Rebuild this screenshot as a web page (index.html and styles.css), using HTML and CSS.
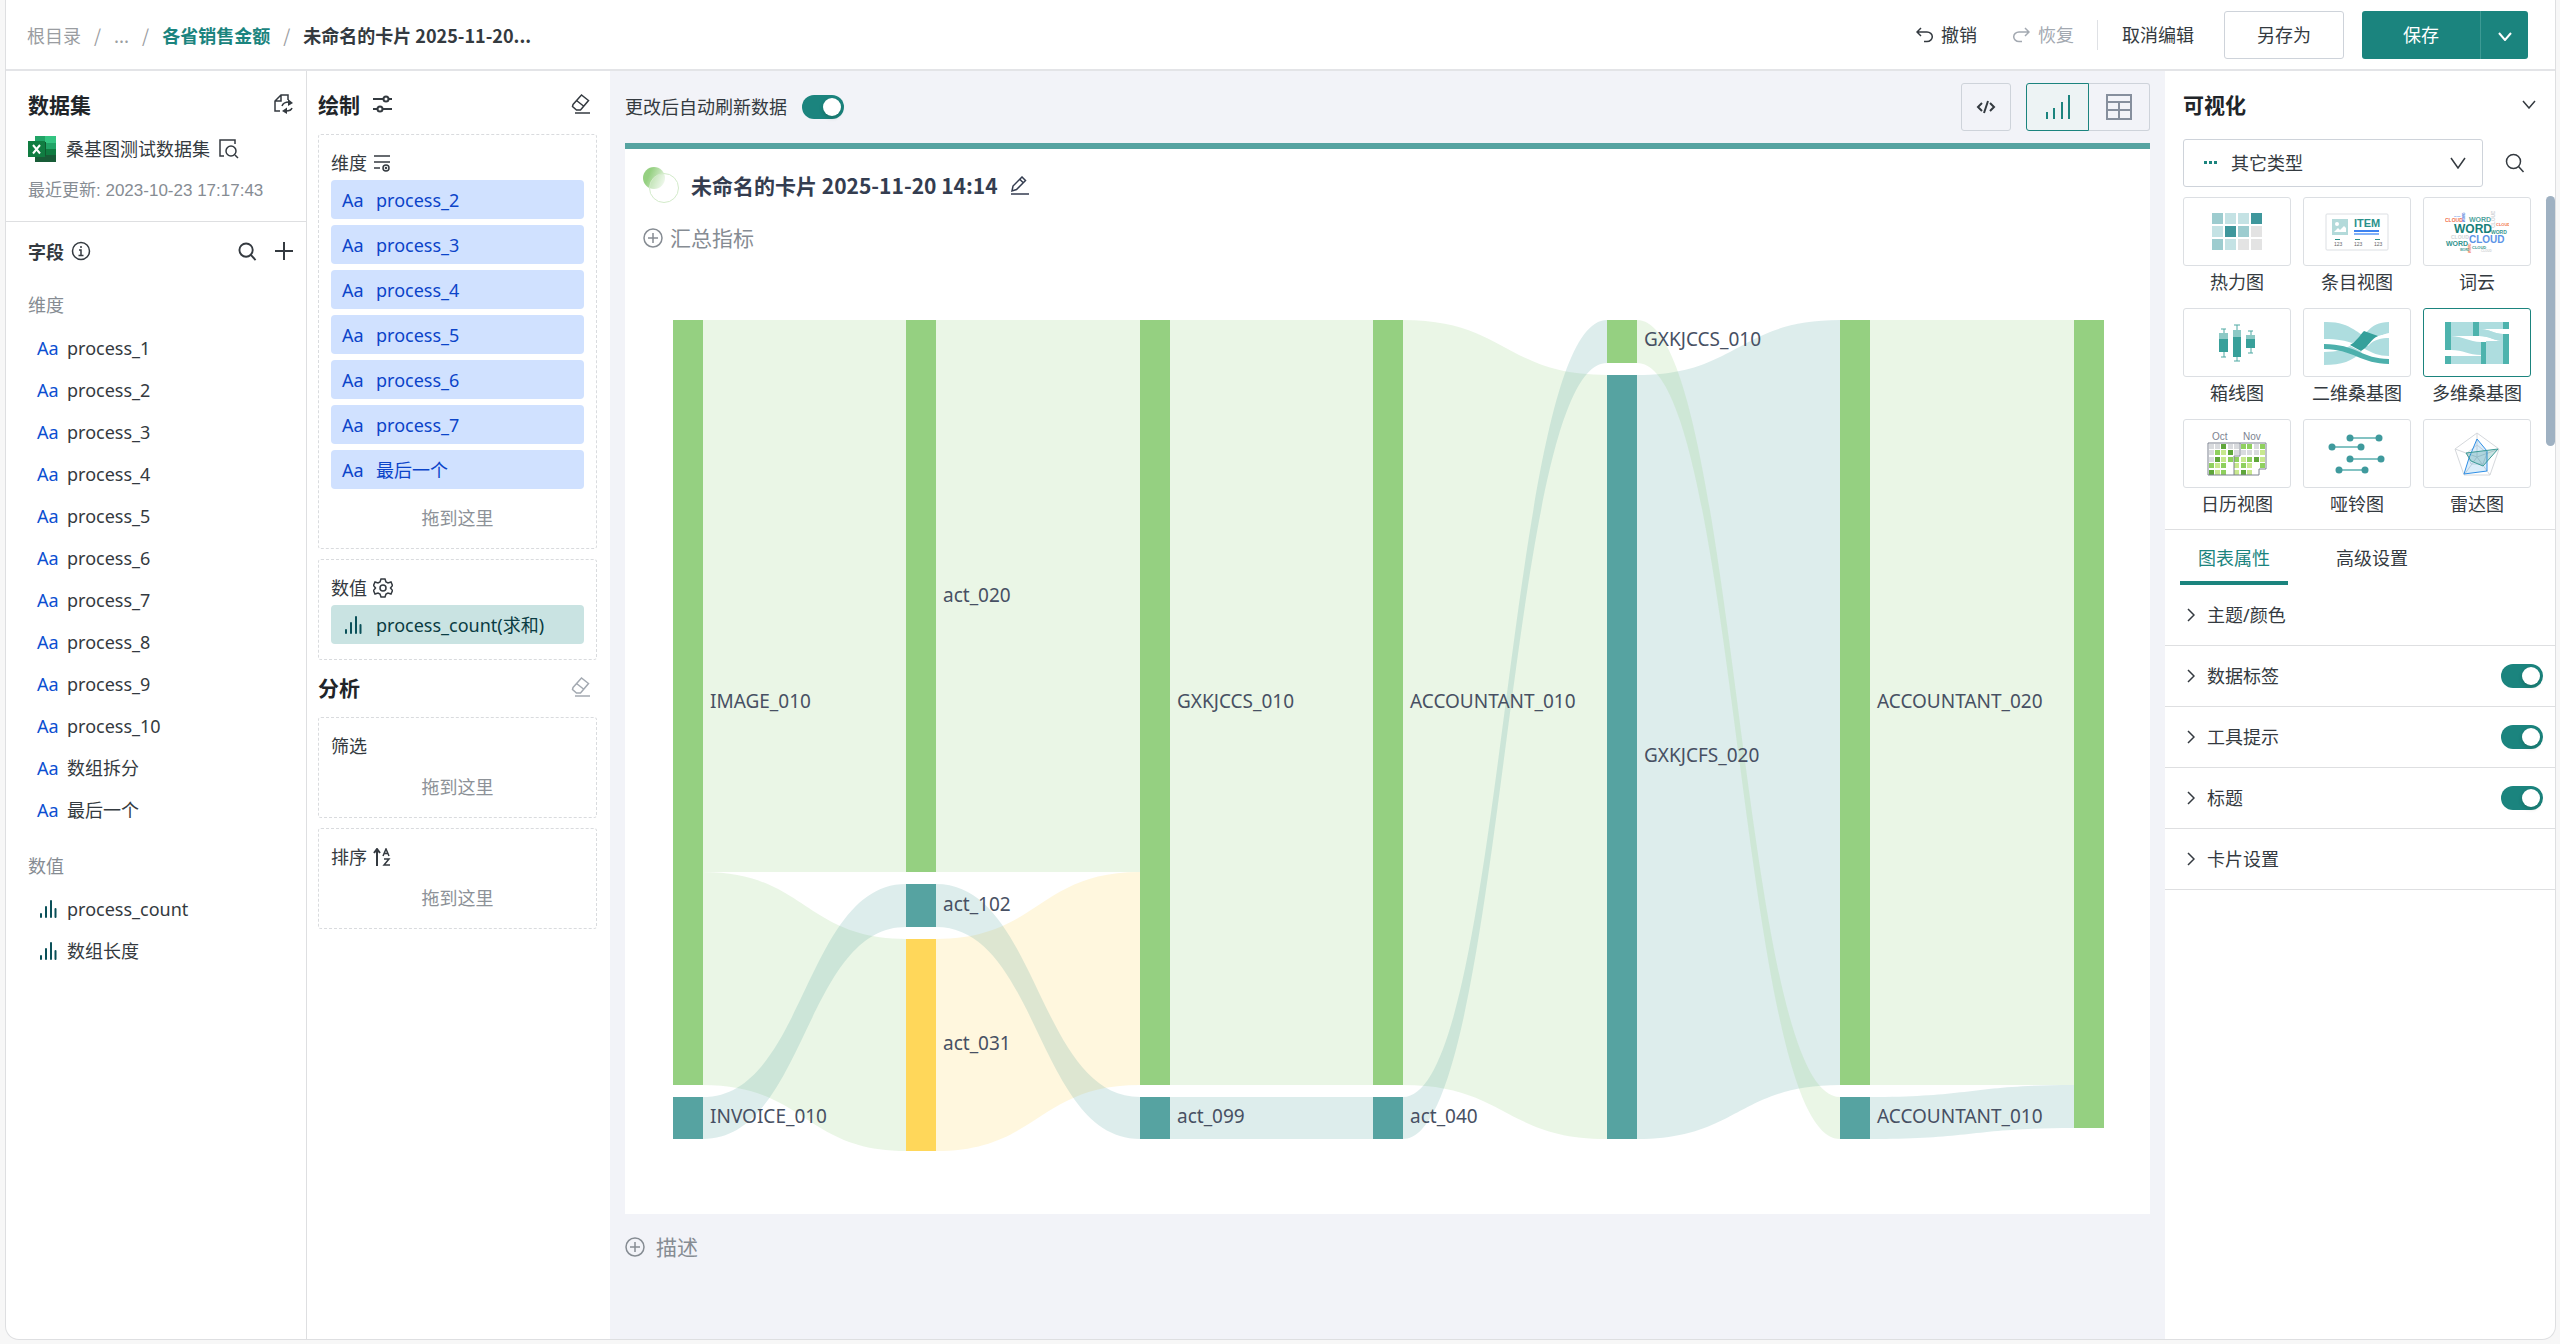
FILE: index.html
```html
<!DOCTYPE html>
<html lang="zh-CN">
<head>
<meta charset="utf-8">
<title>未命名的卡片 2025-11-20 14:14</title>
<link rel="stylesheet" href="styles.css">
</head>
<body>
<svg class="defs" aria-hidden="true">
  <symbol id="i-chevron-right" viewBox="0 0 8 14"><path d="M1 1l6 6-6 6"/></symbol>
  <symbol id="i-chevron-down" viewBox="0 0 14 9"><path d="M1 1l6 7 6-7"/></symbol>
  <symbol id="i-search" viewBox="0 0 20 20"><circle cx="8.500" cy="8.500" r="7"/><path d="M13.500 13.500l5 5.500"/></symbol>
  <symbol id="i-eraser" viewBox="0 0 20 22"><path d="M2 11.500L10.500 2l7 5.500-8 9.500H5.500L1.500 13.500zM5.500 7.500l7 5.500"/><path d="M4 20h15"/></symbol>
  <symbol id="i-plus-circle" viewBox="0 0 20 20"><circle cx="10" cy="10" r="9"/><path d="M10 5v10M5 10h10"/></symbol>
  <symbol id="i-bars" viewBox="0 0 18 18"><path d="M2 14v3M7 7v10M12 1v16M16.500 9v8"/></symbol>
</svg>
<div class="app">
  <header class="topbar">
    <nav class="crumbs" aria-label="路径">
      <a href="#">根目录</a><span>/</span><a href="#">...</a><span>/</span><a href="#" class="crumb-link">各省销售金额</a><span>/</span><strong>未命名的卡片 2025-11-20...</strong>
    </nav>
    <div class="actions">
      <button class="plain"><svg class="icon" width="17" height="16" viewBox="0 0 17 16"><path d="M5 1L1 5l4 4M1 5h10a5 4.500 0 0 1 0 9.500H8"/></svg>撤销</button>
      <button class="plain redo" disabled><svg class="icon" width="17" height="16" viewBox="0 0 17 16"><path d="M12 1l4 4-4 4M16 5H6a5 4.500 0 0 0 0 9.500h3"/></svg>恢复</button>
      <span class="rule"></span>
      <button class="plain cancel">取消编辑</button>
      <button class="outlined">另存为</button>
      <div class="split">
        <button class="save">保存</button><button class="more" aria-label="更多保存选项"><svg class="icon" width="14" height="9"><use href="#i-chevron-down"/></svg></button>
      </div>
    </div>
  </header>

  <aside class="dataset">
    <section class="source">
      <div class="bar">
        <h2>数据集</h2>
        <button class="plain" aria-label="切换数据集"><svg class="icon" width="20" height="20" viewBox="0 0 20 20"><path d="M6 17H1V7l6-6h7v5M7 1v6H1"/><path d="M8 12c1-3 4-4 7-4"/><path class="solid" d="M14 5l5 4-5 3z"/><path d="M18 14c-1 3-4 3-6 3"/><path class="solid" d="M13 13.500l-5 3.500 5 3z"/></svg></button>
      </div>
      <div class="source-name">
        <svg width="28" height="26" viewBox="0 0 28 26"><path fill="#21a366" d="M7 0h21v26H7z"/><path fill="#33c481" d="M17 0h11v7H17z"/><path fill="#107c41" d="M7 7h10v6H7zM17 13h11v6H17z"/><path fill="#185c37" d="M7 13h10v6h11v7H7z"/><path fill="#0e5c30" d="M7 6h11v14H7z"/><rect width="17" height="16" y="5" fill="#107c41"/><path stroke="#fff" stroke-width="2" d="M5 9l7 8.500M12 9l-7 8.500"/></svg>
        <span>桑基图测试数据集</span>
        <svg class="icon" width="20" height="20" viewBox="0 0 20 20"><path d="M5 17H1V1h15v4"/><circle cx="12" cy="12" r="5"/><path d="M16 16l3 3"/></svg>
      </div>
      <p class="updated">最近更新: 2023-10-23 17:17:43</p>
    </section>
    <section class="fields">
      <div class="bar">
        <h3>字段</h3>
        <svg class="icon" width="20" height="20" viewBox="0 0 20 20"><circle cx="10" cy="10" r="8.500"/><path d="M10 5v2M8 9h2v5M7.500 14.500h5"/></svg>
        <button class="plain push" aria-label="搜索字段"><svg class="icon heavy" width="19" height="19"><use href="#i-search" width="19" height="19"/></svg></button>
        <button class="plain" aria-label="新增字段"><svg class="icon heavy" width="18" height="18" viewBox="0 0 18 18"><path d="M9 0v18M0 9h18"/></svg></button>
      </div>
      <h4>维度</h4>
      <ul class="field-list">
        <li><i>Aa</i>process_1</li>
        <li><i>Aa</i>process_2</li>
        <li><i>Aa</i>process_3</li>
        <li><i>Aa</i>process_4</li>
        <li><i>Aa</i>process_5</li>
        <li><i>Aa</i>process_6</li>
        <li><i>Aa</i>process_7</li>
        <li><i>Aa</i>process_8</li>
        <li><i>Aa</i>process_9</li>
        <li><i>Aa</i>process_10</li>
        <li><i>Aa</i>数组拆分</li>
        <li><i>Aa</i>最后一个</li>
      </ul>
      <h4>数值</h4>
      <ul class="field-list">
        <li><i><svg class="bars" width="18" height="18"><use href="#i-bars"/></svg></i>process_count</li>
        <li><i><svg class="bars" width="18" height="18"><use href="#i-bars"/></svg></i>数组长度</li>
      </ul>
    </section>
  </aside>

  <section class="draw">
    <div class="bar">
      <h2>绘制</h2>
      <svg class="icon heavy" width="20" height="18" viewBox="0 0 20 18"><path d="M1 4h10M17 4h3M1 14h4M11 14h9"/><circle cx="14" cy="4" r="2.500"/><circle cx="8" cy="14" r="2.500"/></svg>
      <button class="plain push" aria-label="清空绘制"><svg class="icon" width="20" height="22"><use href="#i-eraser"/></svg></button>
    </div>
    <div class="zone">
      <h4>维度 <svg class="icon" width="18" height="18" viewBox="0 0 18 18"><path d="M1 2h16M1 8h16M1 14h6"/><circle cx="13" cy="14" r="3"/><circle cx="13" cy="14" r="0.500"/></svg></h4>
      <ul class="chips">
        <li><i>Aa</i>process_2</li>
        <li><i>Aa</i>process_3</li>
        <li><i>Aa</i>process_4</li>
        <li><i>Aa</i>process_5</li>
        <li><i>Aa</i>process_6</li>
        <li><i>Aa</i>process_7</li>
        <li><i>Aa</i>最后一个</li>
      </ul>
      <p class="drop">拖到这里</p>
    </div>
    <div class="zone">
      <h4>数值 <svg class="icon" width="20" height="20" viewBox="0 0 20 20"><path d="M8 1h4l1 3 2 1 3-1 1.500 3.500L17.500 10l2 2.500L18 16l-3-1-2 1-1 3H8l-1-3-2-1-3 1-1.500-3.500L2.500 10l-2-2.500L2 4l3 1 2-1z"/><circle cx="10" cy="10" r="3"/></svg></h4>
      <ul class="chips">
        <li class="measure"><i><svg class="bars" width="18" height="18"><use href="#i-bars"/></svg></i>process_count(求和)</li>
      </ul>
    </div>
    <div class="bar analysis">
      <h2>分析</h2>
      <button class="plain push" aria-label="清空分析" disabled><svg class="icon" width="20" height="22"><use href="#i-eraser"/></svg></button>
    </div>
    <div class="zone">
      <h4>筛选</h4>
      <p class="drop">拖到这里</p>
    </div>
    <div class="zone">
      <h4>排序 <svg class="icon heavy" width="18" height="18" viewBox="0 0 18 18"><path d="M4 18V2M1 5l3-4 3 4"/><path class="thin" d="M10 8l3-7 3 7M11 5.500h4M11 11h5l-5 6h6"/></svg></h4>
      <p class="drop">拖到这里</p>
    </div>
  </section>

  <main class="stage">
    <div class="toolbar">
      <label class="switch-label" for="auto">更改后自动刷新数据</label>
      <input class="switch" type="checkbox" id="auto" checked>
      <button class="tool push" aria-label="代码"><svg class="icon heavy" width="20" height="14" viewBox="0 0 20 14"><path d="M6 3L2 7l4 4M14 3l4 4-4 4M12 1L8 13"/></svg></button>
      <div class="tool-group">
        <button class="tool active" aria-label="图表"><svg class="icon" width="26" height="26" viewBox="0 0 26 26"><path class="stem" d="M2 18v7M9 14v11M17 8v17M24 1v24"/></svg></button>
        <button class="tool" aria-label="表格"><svg class="icon table" width="26" height="26" viewBox="0 0 26 26"><path d="M1 1h24v24H1zM1 8h24M1 16h24M13 8v17"/></svg></button>
      </div>
    </div>
    <article class="card">
      <div class="card-title">
        <svg width="36" height="36" viewBox="0 0 36 36"><defs><linearGradient id="dot" x1="0" y1="0.300" x2="1" y2="0.700"><stop offset="0.250" stop-color="#95d081"/><stop offset="1" stop-color="#95d081" stop-opacity="0.200"/></linearGradient></defs><circle cx="11" cy="11" r="11" fill="url(#dot)"/><circle cx="21" cy="21" r="14.500" fill="#fff" fill-opacity="0.300" stroke="#d3ebca"/></svg>
        <h1>未命名的卡片 2025-11-20 14:14</h1>
        <button class="plain" aria-label="编辑标题"><svg class="icon" width="20" height="19" viewBox="0 0 20 19"><path d="M2 15l1-5 9-9 3.500 3.500-9 9zM10 3.500L13.500 7M1 18h18"/></svg></button>
      </div>
      <button class="plain add"><svg class="icon" width="20" height="20"><use href="#i-plus-circle"/></svg>汇总指标</button>
      <svg class="sankey" viewBox="0 0 1525 944" role="img" aria-label="多维桑基图">
        <g class="links">
          <path class="g" d="M78 50H281V602H78z"/>
          <path class="g" d="M78 602C180 602 180 669 281 669V881C180 881 180 815 78 815z"/>
          <path class="t" d="M78 827C180 827 180 614 281 614V657C180 657 180 869 78 869z"/>
          <path class="g" d="M311 50H515V602H311z"/>
          <path class="y" d="M311 669C413 669 413 602 515 602V815C413 815 413 881 311 881z"/>
          <path class="t" d="M311 614C413 614 413 827 515 827V869C413 869 413 657 311 657z"/>
          <path class="g" d="M545 50H748V815H545z"/>
          <path class="t" d="M545 827H748V869H545z"/>
          <path class="g" d="M778 50C880 50 880 105 982 105V869C880 869 880 815 778 815z"/>
          <path class="t" d="M778 827C880 827 880 50 982 50V93C880 93 880 869 778 869z"/>
          <path class="t" d="M1012 105C1113 105 1113 50 1215 50V815C1113 815 1113 869 1012 869z"/>
          <path class="g" d="M1012 50C1113 50 1113 827 1215 827V869C1113 869 1113 93 1012 93z"/>
          <path class="g" d="M1245 50H1449V815H1245z"/>
          <path class="t" d="M1245 827C1347 827 1347 815 1449 815V858C1347 858 1347 869 1245 869z"/>
        </g>
        <g class="nodes">
          <rect class="g" x="48" y="50" width="30" height="765"/>
          <rect class="t" x="48" y="827" width="30" height="42"/>
          <rect class="g" x="281" y="50" width="30" height="552"/>
          <rect class="t" x="281" y="614" width="30" height="43"/>
          <rect class="y" x="281" y="669" width="30" height="212"/>
          <rect class="g" x="515" y="50" width="30" height="765"/>
          <rect class="t" x="515" y="827" width="30" height="42"/>
          <rect class="g" x="748" y="50" width="30" height="765"/>
          <rect class="t" x="748" y="827" width="30" height="42"/>
          <rect class="g" x="982" y="50" width="30" height="43"/>
          <rect class="t" x="982" y="105" width="30" height="764"/>
          <rect class="g" x="1215" y="50" width="30" height="765"/>
          <rect class="t" x="1215" y="827" width="30" height="42"/>
          <rect class="g" x="1449" y="50" width="30" height="808"/>
        </g>
        <g class="labels">
          <text x="85" y="438">IMAGE_010</text>
          <text x="85" y="853">INVOICE_010</text>
          <text x="318" y="332">act_020</text>
          <text x="318" y="641">act_102</text>
          <text x="318" y="780">act_031</text>
          <text x="552" y="438">GXKJCCS_010</text>
          <text x="552" y="853">act_099</text>
          <text x="785" y="438">ACCOUNTANT_010</text>
          <text x="785" y="853">act_040</text>
          <text x="1019" y="76">GXKJCCS_010</text>
          <text x="1019" y="492">GXKJCFS_020</text>
          <text x="1252" y="438">ACCOUNTANT_020</text>
          <text x="1252" y="853">ACCOUNTANT_010</text>
        </g>
      </svg>
    </article>
    <button class="plain add describe"><svg class="icon" width="20" height="20"><use href="#i-plus-circle"/></svg>描述</button>
  </main>

  <aside class="visual">
    <div class="bar">
      <h2>可视化</h2>
      <button class="plain push" aria-label="收起"><svg class="icon" width="14" height="9"><use href="#i-chevron-down"/></svg></button>
    </div>
    <div class="filter">
      <div class="select">
        <svg width="14" height="4" viewBox="0 0 14 4"><path fill="#1b847e" d="M0 0h3v3H0zM5 0h3v3H5zM10 0h3v3h-3z"/></svg>
        <select aria-label="图表类型"><option>其它类型</option></select>
        <svg class="icon arrow" width="16" height="12" viewBox="0 0 16 12"><path d="M1 1l7 10 7-10"/></svg>
      </div>
      <button class="plain" aria-label="搜索图表"><svg class="icon" width="20" height="20"><use href="#i-search"/></svg></button>
    </div>
    <div class="gallery">
      <button class="type"><span class="thumb"><svg width="50" height="38" viewBox="0 0 50 38"><path fill="#9dcccf" d="M0 0h11v11H0zM26 13h11v11H26zM0 26h11v11H0z"/><path fill="#c4e2e4" d="M13 0h11v11H13zM26 0h11v11H26zM0 13h11v11H0zM13 26h11v11H13z"/><path fill="#3f979c" d="M39 0h11v11H39zM13 13h11v11H13z"/><path fill="#e3e3e3" d="M39 13h11v11H39zM26 26h11v11H26zM39 26h11v11H39z"/></svg></span>热力图</button>
      <button class="type"><span class="thumb"><svg width="64" height="38" viewBox="0 0 64 38"><rect x="1" y="1" width="62" height="36" rx="1" fill="none" stroke="#dcdfe3"/><path fill="#b3dada" d="M7 6h16v16H7z"/><circle cx="12" cy="11" r="2" fill="#fff"/><path fill="#fff" d="M9 19l4-4 2 2 4-4 2 2v4z"/><text x="29" y="14" class="tiny item">ITEM</text><path fill="#3d82f0" d="M29 17h25v2H29z"/><path fill="#83b1f8" d="M29 20h25v2H29z"/><path fill="#2a918b" d="M10 26h5v1h-5zM30 26h5v1h-5zM50 26h5v1h-5z"/><g class="tiny n"><text x="9" y="33">123</text><text x="29" y="33">123</text><text x="49" y="33">123</text></g></svg></span>条目视图</button>
      <button class="type"><span class="thumb"><svg class="cloud" width="64" height="42" viewBox="0 0 64 42"><g class="tiny"><text x="0" y="11" font-size="5" fill="#f2714f">CLOUD</text><text x="9" y="6" font-size="2" fill="#6b9bea">WORD</text><text transform="translate(20 11) rotate(-90)" font-size="3" fill="#3a6fd8">WORD</text><text x="24" y="11" font-size="7" fill="#4fa39d">WORD</text><text transform="translate(50 17) rotate(-90)" font-size="5" fill="#cfd2d6">CLOUD</text><text x="9" y="22" font-size="12" fill="#17807a">WORD</text><text x="51" y="15" font-size="4" fill="#f2714f">CLOUD</text><text x="46" y="23" font-size="5" fill="#35958f">WORD</text><text x="6" y="28" font-size="5" fill="#d0d3d6">CLOUD</text><text x="24" y="32" font-size="10" fill="#5b93e6">CLOUD</text><text x="1" y="35" font-size="7" fill="#35958f">WORD</text><text x="27" y="38" font-size="4" fill="#35958f">CLOUD</text><text x="15" y="40" font-size="3" fill="#35958f">WORD</text><text transform="translate(26 42) rotate(-90)" font-size="3" fill="#f2714f">WORD</text><text x="36" y="41" font-size="3" fill="#d0d3d6">CLOUD</text></g></svg></span>词云</button>
      <button class="type"><span class="thumb"><svg width="38" height="38" viewBox="0 0 38 38"><path stroke="#4fa9a3" d="M6 5v28M3 5h5M3 33h5M19 1v36M16 1h6M16 37h6M33 7v22M30 7h5M30 29h5"/><path fill="#8cc9c5" d="M1 9h9v7H1zM15 6h8v7h-8zM28 11h9v5h-9z"/><path fill="#38a09a" d="M1 15h9v13H1zM15 13h8v20h-8zM28 15h9v9h-9z"/></svg></span>箱线图</button>
      <button class="type"><span class="thumb"><svg width="66" height="44" viewBox="0 0 66 44"><path fill="#aedddf" d="M0 1C28 0 34 15 46 17C54 18 58 13 65 12V1C44 1 42 17 28 22C22 20 14 18 0 18zM65 17C50 16 46 20 39 27C48 32 55 35 65 35zM0 31C14 31 20 28 26 25L38 31C28 40 18 44 0 44z"/><path fill="#fff" d="M65 13C52 14 48 18 42 23L44 25C50 18 58 17 65 17z"/><path fill="#4db0ac" d="M0 23C32 23 38 38 65 38V43C38 43 28 28 0 28z"/><path fill="#35a09b" d="M40 10l14 5C47 18 44 26 37 30L26 24C33 20 36 14 40 10z"/></svg></span>二维桑基图</button>
      <button class="type selected"><span class="thumb"><svg width="64" height="42" viewBox="0 0 64 42"><path fill="#aedddf" d="M6 0h22v14H6zM34 0h24v7H34zM6 14c14 0 18 5 30 5h5c-2 0-3-2-7-5v-7C44 7 50 12 58 12v30H6v-8h30v-1C24 33 18 28 6 28z"/><path fill="#fff" d="M6 14h28C44 14 50 19 58 19h-17v1h-5C24 20 18 14 6 14z"/><path fill="#aedddf" d="M34 7C44 7 50 12 58 12v7C50 19 44 14 34 14z"/><path fill="#4db3ad" d="M0 0h6v28H0zM0 34h6v8H0zM28 0h6v14h-6zM58 0h6v7h-6zM58 12h6v30h-6zM36 20h5v22h-5z"/></svg></span>多维桑基图</button>
      <button class="type"><span class="thumb"><svg width="60" height="44" viewBox="0 0 60 44"><g class="month"><text x="5" y="8">Oct</text><text x="36" y="8">Nov</text></g><path fill="#d9dbde" d="M2 12h5v5H2zM8 12h5v5H8zM21 12h5v5h-5zM27 12h5v5h-5zM2 18h5v5H2zM27 18h5v5h-5zM34 18h5v5h-5zM47 12h5v5h-5zM40 18h5v5h-5zM2 25h5v5H2zM47 18h5v5h-5z"/><path fill="#5fa63a" d="M14 12h5v5h-5zM21 18h5v5h-5zM8 25h5v5H8zM47 25h5v5h-5zM2 38h5v5H2zM34 38h5v5h-5z"/><path fill="#8fd05e" d="M34 12h5v5h-5zM40 12h5v5h-5zM53 12h5v5h-5zM8 18h5v5H8zM21 25h5v5h-5zM27 25h5v5h-5zM40 25h5v5h-5zM2 31h5v5H2zM14 31h5v5h-5zM34 31h5v5h-5zM53 31h5v5h-5zM14 38h5v5h-5z"/><path fill="#c8e88e" d="M14 18h5v5h-5zM53 18h5v5h-5zM14 25h5v5h-5zM34 25h5v5h-5zM8 31h5v5H8zM27 31h5v5h-5zM40 31h5v5h-5zM8 38h5v5H8zM27 38h5v5h-5zM40 38h5v5h-5zM53 25h5v5h-5z"/><path fill="none" stroke="#7c8290" d="M1 11h58v26h-7v6H1zM33 11v13h-6v19"/></svg></span>日历视图</button>
      <button class="type"><span class="thumb"><svg width="58" height="42" viewBox="0 0 58 42"><path stroke="#84c3c3" stroke-width="2" d="M22 5h29M5 14h28M22 26h32M11 37h26"/><g fill="#3f9a9d"><circle cx="22" cy="5" r="3.500"/><circle cx="51" cy="5" r="3.500"/><circle cx="4" cy="14" r="3.500"/><circle cx="33" cy="14" r="3.500"/><circle cx="22" cy="26" r="3.500"/><circle cx="53" cy="26" r="3.500"/><circle cx="11" cy="37" r="3.500"/><circle cx="37" cy="37" r="3.500"/></g></svg></span>哑铃图</button>
      <button class="type"><span class="thumb"><svg width="46" height="44" viewBox="0 0 46 44"><path fill="none" stroke="#d5d8dc" d="M23 1l22 16-9 26H10L1 17zM23 13l10 8-4 11H17l-4-11zM23 1v24M45 17L23 25l13 18M10 43l13-18L1 17"/><path fill="#4aa4e8" fill-opacity="0.200" stroke="#2f8fe6" d="M23 7l10 12v20L10 42l5-16z"/><path fill="#2a918b" fill-opacity="0.250" stroke="#3c9b97" d="M12 21l32-4-15 17-12-5z"/></svg></span>雷达图</button>
      <span class="scroll"></span>
    </div>
    <div class="tabs" role="tablist">
      <button role="tab" class="tab current" aria-selected="true">图表属性</button>
      <button role="tab" class="tab" aria-selected="false">高级设置</button>
    </div>
    <div class="props">
      <div class="prop"><svg class="icon" width="8" height="14"><use href="#i-chevron-right"/></svg><span>主题/颜色</span></div>
      <div class="prop"><svg class="icon" width="8" height="14"><use href="#i-chevron-right"/></svg><label for="p1">数据标签</label><input class="switch" type="checkbox" id="p1" checked></div>
      <div class="prop"><svg class="icon" width="8" height="14"><use href="#i-chevron-right"/></svg><label for="p2">工具提示</label><input class="switch" type="checkbox" id="p2" checked></div>
      <div class="prop"><svg class="icon" width="8" height="14"><use href="#i-chevron-right"/></svg><label for="p3">标题</label><input class="switch" type="checkbox" id="p3" checked></div>
      <div class="prop"><svg class="icon" width="8" height="14"><use href="#i-chevron-right"/></svg><span>卡片设置</span></div>
    </div>
  </aside>
</div>
</body>
</html>
```
FILE: styles.css
```css
* { box-sizing: border-box; }
body {
  margin: 0;
  padding: 0 4px 4px 5px;
  background: #f7f7f7;
  color: #343a40;
  font: 18px/24px "Noto Sans", "Noto Sans CJK SC", sans-serif;
}
h1, h2, h3, h4, p, ul { margin: 0; padding: 0; }
ul { list-style: none; }
a { color: inherit; text-decoration: none; }
i { font-style: normal; }
button, select { font: inherit; color: inherit; }
button { cursor: pointer; }
.defs { position: absolute; width: 0; height: 0; }

.icon { flex: none; fill: none; stroke: currentColor; stroke-width: 1.5px; }
.icon.heavy { stroke-width: 2px; }
.icon .solid { fill: currentColor; stroke: none; }
.icon .thin { stroke-width: 1.5px; }
.plain {
  display: flex;
  align-items: center;
  gap: 8px;
  padding: 0;
  border: 0;
  background: none;
}
.plain:disabled { color: #a3a9b1; }
.push { margin-left: auto; }
h2 { font: 700 21px/28px "Noto Sans CJK SC", sans-serif; color: #212529; }
h3 { font: 700 18px/24px "Noto Sans CJK SC", sans-serif; }
h4 { font-weight: 400; font-size: 18px; line-height: 24px; }

.app {
  display: grid;
  grid-template: 71px 1fr / 301px 303px minmax(0, 1fr) 390px;
  min-height: calc(100vh - 4px);
  border: 1px solid #dedfe1;
  border-top: 0;
  border-radius: 0 0 14px 14px;
  background: #fff;
  overflow: hidden;
}

/* Top bar */
.topbar {
  grid-column: 1 / -1;
  display: flex;
  align-items: center;
  justify-content: space-between;
  padding: 0 27px 0 21px;
  border-bottom: 2px solid #e3e4e7;
}
.crumbs { display: flex; gap: 13px; color: #9a9da1; font-family: "Noto Sans CJK SC", sans-serif; }
.crumb-link { color: #1b847e; font-weight: 700; }
.crumbs strong { color: #343a40; }
.actions { display: flex; align-items: center; }
.redo { margin-left: 36px; }
.rule { width: 1px; height: 30px; margin: 0 24px 0 23px; background: #dfe1e5; }
.cancel { margin-right: 30px; }
.outlined {
  width: 120px;
  height: 48px;
  margin-right: 18px;
  border: 1px solid #ced3da;
  border-radius: 3px;
  background: #fff;
}
.split { display: flex; border-radius: 3px; background: #1b847e; color: #fff; }
.split button { height: 48px; padding: 0; border: 0; background: none; }
.save { width: 118px; }
.split .more { width: 48px; border-left: 1px solid #3d9a94; }
.more .icon { stroke-width: 2px; vertical-align: middle; }

/* Dataset column */
.bar { display: flex; align-items: center; }
.dataset { border-right: 1px solid #dedfe1; }
.source { height: 151px; padding: 19px 12px 0 22px; border-bottom: 1px solid #dedfe1; }
.source .bar { justify-content: space-between; }
.source-name { display: flex; align-items: center; margin-top: 18px; }
.source-name span { margin: 0 9px 0 10px; }
.updated { margin-top: 17px; color: #868c93; font: 17px/24px "Liberation Sans", "Noto Sans CJK SC", sans-serif; }
.fields { padding: 17px 12px 0 22px; }
.fields .bar { gap: 7px; padding-right: 1px; }
.fields .bar .push { margin-right: 11px; margin-left: auto; }
.fields h4 { margin: 30px 0 10px; color: #868c93; }
.field-list li { display: flex; align-items: center; height: 42px; padding-left: 9px; }
.fields .field-list + h4 { margin: 23px 0 10px; }
.field-list i { display: flex; width: 30px; color: #0b4fd1; }
.bars { margin-left: 2px; stroke: #0a5059; stroke-width: 2px; stroke-linecap: round; }

/* Draw column */
.draw { padding: 19px 13px 0 11px; }
.draw .bar { gap: 12px; padding-right: 6px; }
.zone {
  min-height: 101px;
  margin-top: 10px;
  padding: 16px 12px 14px;
  border: 1px dashed #d9dbde;
  border-radius: 3px;
}
.bar + .zone { margin-top: 16px; }
.zone h4 { display: flex; align-items: center; gap: 6px; }
.chips { display: grid; gap: 6px; margin-top: 5px; }
.chips li {
  display: flex;
  align-items: center;
  height: 39px;
  padding-left: 11px;
  border-radius: 4px;
  background: #d0e1ff;
  color: #0b44c9;
}
.chips i { display: flex; width: 34px; }
.chips .measure { background: #c9e3e2; color: #0a3c42; }
.drop { margin-top: 17px; text-align: center; color: #8d9298; }
.chips + .drop { margin: 17px 0 4px; }
.analysis { margin-top: 13px; }

/* Stage */
.stage { padding: 12px 15px 0; background: #f2f3f8; }
.toolbar { display: flex; align-items: center; height: 48px; }
.switch-label { margin-right: 15px; }
.switch {
  flex: none;
  appearance: none;
  width: 42px;
  height: 24px;
  margin: 0;
  padding: 3px;
  border-radius: 12px;
  background: #adb5bd;
}
.switch::before {
  content: "";
  display: block;
  width: 18px;
  height: 18px;
  border-radius: 50%;
  background: #fff;
  box-shadow: 0 2px 4px rgba(0, 35, 11, 0.2);
}
.switch:checked { background: #1b847e; }
.switch:checked::before { margin-left: auto; }
.tool {
  display: flex;
  align-items: center;
  justify-content: center;
  width: 50px;
  height: 48px;
  padding: 0;
  border: 1px solid #ced3da;
  border-radius: 3px;
  background: none;
}
.tool-group { display: flex; margin-left: 15px; }
.tool-group .tool { width: 61px; border-left: 0; border-radius: 0 3px 3px 0; }
.tool-group .active { width: 63px; border: 1px solid #1b847e; border-radius: 3px 0 0 3px; background: #edf3f4; color: #1b847e; }
.stem { stroke-width: 2px; }
.table { color: #868f9d; stroke-width: 2px; }
.card { margin-top: 12px; border-top: 6px solid #56a3a1; background: #fff; }
.card-title { display: flex; align-items: center; padding: 18px 18px 0; color: #343d50; }
.card-title svg { flex: none; }
h1 { margin: 0 12px; font: 700 21px/28px "Noto Sans CJK SC", sans-serif; }
.add { gap: 7px; color: #868c93; font-size: 21px; line-height: 30px; }
.card .add { margin: 20px 18px 0; }
.describe { gap: 11px; margin: 18px 0 0; }
.sankey { display: block; width: 100%; height: auto; margin-top: 17px; }
.links { fill-opacity: 0.2; }
.g { fill: #95d081; }
.t { fill: #56a3a1; }
.y { fill: #ffd75a; }
.labels { fill: #475063; font-size: 19px; }

/* Visualisation column */
.visual .bar { padding: 19px 19px 0 18px; }
.filter { display: flex; align-items: center; gap: 22px; padding: 21px 0 0 18px; }
.select {
  display: flex;
  align-items: center;
  width: 300px;
  height: 48px;
  padding: 0 16px 0 20px;
  border: 1px solid #ced3da;
  border-radius: 3px;
}
.select select { flex: 1; appearance: none; padding: 0 13px; border: 0; background: none; }
.gallery {
  position: relative;
  display: grid;
  grid-template-columns: repeat(3, 108px);
  gap: 12px;
  padding: 9px 0 12px 18px;
  border-bottom: 1px solid #dedfe1;
}
.type { height: 99px; padding: 0; border: 0; background: none; }
.thumb {
  display: flex;
  align-items: center;
  justify-content: center;
  height: 69px;
  margin-bottom: 4px;
  border: 1px solid #dcdfe3;
  border-radius: 3px;
}
.selected .thumb { border-color: #1b847e; }
.scroll { position: absolute; top: 9px; right: 0; width: 9px; height: 250px; border-radius: 5px; background: #9fb1c2; }
.tiny { font-family: "Liberation Sans", sans-serif; font-weight: 700; }
.item { font-size: 11px; fill: #2a918b; }
.tiny.n { font-size: 5px; font-weight: 400; fill: #666; }
.month { font: 10px "Liberation Sans", sans-serif; fill: #7c8290; }
.tabs { display: flex; gap: 30px; padding: 11px 0 0 15px; }
.tab { width: 108px; height: 44px; padding: 0 0 6px; border: 0; border-bottom: 4px solid transparent; background: none; }
.tab.current { border-color: #1b847e; color: #1b847e; }
.prop {
  display: flex;
  align-items: center;
  height: 61px;
  padding: 0 12px 0 22px;
  border-bottom: 1px solid #dedfe1;
}
.prop .icon { margin-right: 12px; }
.prop .switch { margin-left: auto; }
```
